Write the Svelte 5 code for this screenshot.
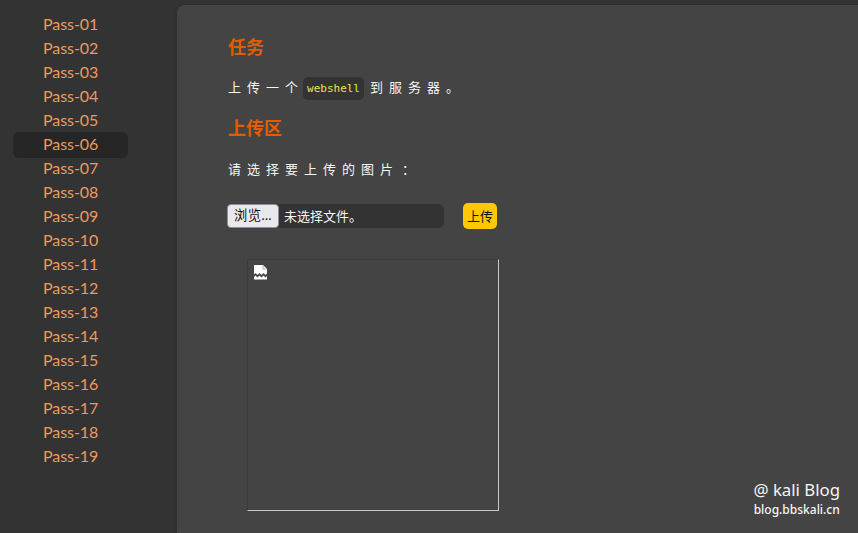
<script>
  const passes = Array.from({ length: 19 }, (_, i) => 'Pass-' + String(i + 1).padStart(2, '0'));
  let current = 'Pass-06';
</script>

<div class="page">
  <nav class="sidebar">
    {#each passes as name}
      <a href="#{name}" class="nav-item" class:active={name === current}>{name}</a>
    {/each}
  </nav>

  <main class="content">
    <h3>任务</h3>
    <p class="text first">上传一个<code>webshell</code>到服务器。</p>
    <h3 class="second">上传区</h3>
    <p class="text pick">请选择要上传的图片<span class="colon">：</span></p>

    <form class="upload" on:submit|preventDefault>
      <div class="file">
        <span class="browse">浏览…</span>
        <span class="file-name">未选择文件。</span>
      </div>
      <button class="submit" type="submit">上传</button>
    </form>

    <div class="preview">
      <svg class="broken" width="14" height="15" viewBox="0 0 14 15" aria-hidden="true">
        <path d="M0 0h9l4 4v4.500l-1.500 1.500-2-2-2 2-2-2-2 2-2-2-1.500 1.500z" fill="#fff" />
        <path d="M9 0.500v3.500h3.500" fill="none" stroke="#aaa" stroke-width="1" />
        <path d="M0 12l1.500-1.500 2 2 2-2 2 2 2-2 2 2 1.500-1.500v3.500H0z" fill="#fff" />
      </svg>
    </div>

    <div class="mark">
      <div class="mark-title">@ kali Blog</div>
      <div class="mark-url">blog.bbskali.cn</div>
    </div>
  </main>
</div>

<style>
  :global(body) {
    margin: 0;
    background: #333;
  }

  .page {
    display: flex;
    height: 533px;
    overflow: hidden;
    background: #333;
    font-family: Lato, "Noto Sans CJK SC", sans-serif;
  }

  .sidebar {
    display: flex;
    flex-direction: column;
    box-sizing: border-box;
    width: 177px;
    flex: none;
    padding: 12px 49px 0 13px;
  }

  .nav-item {
    display: block;
    padding: 0 30px;
    font-size: 16px;
    line-height: 24px;
    letter-spacing: -0.05px;
    color: #ec9a60;
    text-decoration: none;
    white-space: nowrap;
    border-radius: 6px;
  }

  .nav-item.active {
    margin-bottom: -2px;
    padding-bottom: 2px;
    background: #262626;
  }

  .content {
    position: relative;
    flex: 1;
    margin-top: 5px;
    padding: 0 0 0 51px;
    background: #444;
    border-top-left-radius: 8px;
    box-shadow: 0 0 3px rgba(0, 0, 0, 0.2);
  }

  h3 {
    margin: 29px 0 0;
    font-size: 18px;
    line-height: 26px;
    font-weight: 700;
    color: #e05d00;
  }

  h3.second {
    margin-top: 15px;
  }

  .text {
    margin: 0;
    font-size: 13px;
    line-height: 24px;
    letter-spacing: 6px;
    color: #f5f5f5;
    white-space: nowrap;
  }

  .colon {
    margin-left: 3px;
  }

  .first {
    margin-top: 15px;
  }

  .pick {
    margin-top: 16px;
  }

  code {
    display: inline-block;
    margin: 0 6px 0 -1px;
    padding: 0 4px;
    font-family: "DejaVu Sans Mono", monospace;
    font-size: 11px;
    line-height: 23px;
    letter-spacing: 0;
    color: #e8e25a;
    background: #333;
    border-radius: 5px;
    vertical-align: middle;
  }

  .upload {
    display: flex;
    align-items: center;
    margin: 22px 0 0 -1px;
  }

  .file {
    display: flex;
    align-items: center;
    width: 217px;
    height: 24px;
    background: #333;
    border-radius: 6px;
    font-size: 13px;
    color: #f5f5f5;
  }

  .browse {
    box-sizing: border-box;
    width: 52px;
    height: 24px;
    font-size: 13.300px;
    letter-spacing: 0.500px;
    line-height: 21px;
    text-align: center;
    color: #111;
    background: #e9e9ed;
    border: 1px solid #8f8f9d;
    border-radius: 4px;
    white-space: nowrap;
  }

  .file-name {
    margin: -2px 0 0 5px;
  }

  .submit {
    width: 34px;
    height: 26px;
    margin-left: 19px;
    padding: 0 0 2px;
    border: 0;
    border-radius: 5px;
    background: #ffc800;
    color: #111;
    font-family: inherit;
    font-size: 13px;
  }

  .preview {
    box-sizing: border-box;
    width: 252px;
    height: 252px;
    margin: 30px 0 0 19px;
    border: 1px solid;
    border-color: #3a3a3a #c8c8c8 #c8c8c8 #3a3a3a;
  }

  .broken {
    display: block;
    margin: 5px 0 0 6px;
  }

  .mark {
    position: absolute;
    right: 18px;
    bottom: 14px;
    text-align: center;
    color: #f5f5f5;
    font-family: "Noto Sans", "Open Sans", sans-serif;
  }

  .mark-title {
    font-size: 16.800px;
    line-height: 22px;
  }

  .mark-url {
    font-size: 12px;
    font-weight: 500;
    line-height: 18px;
  }
</style>
